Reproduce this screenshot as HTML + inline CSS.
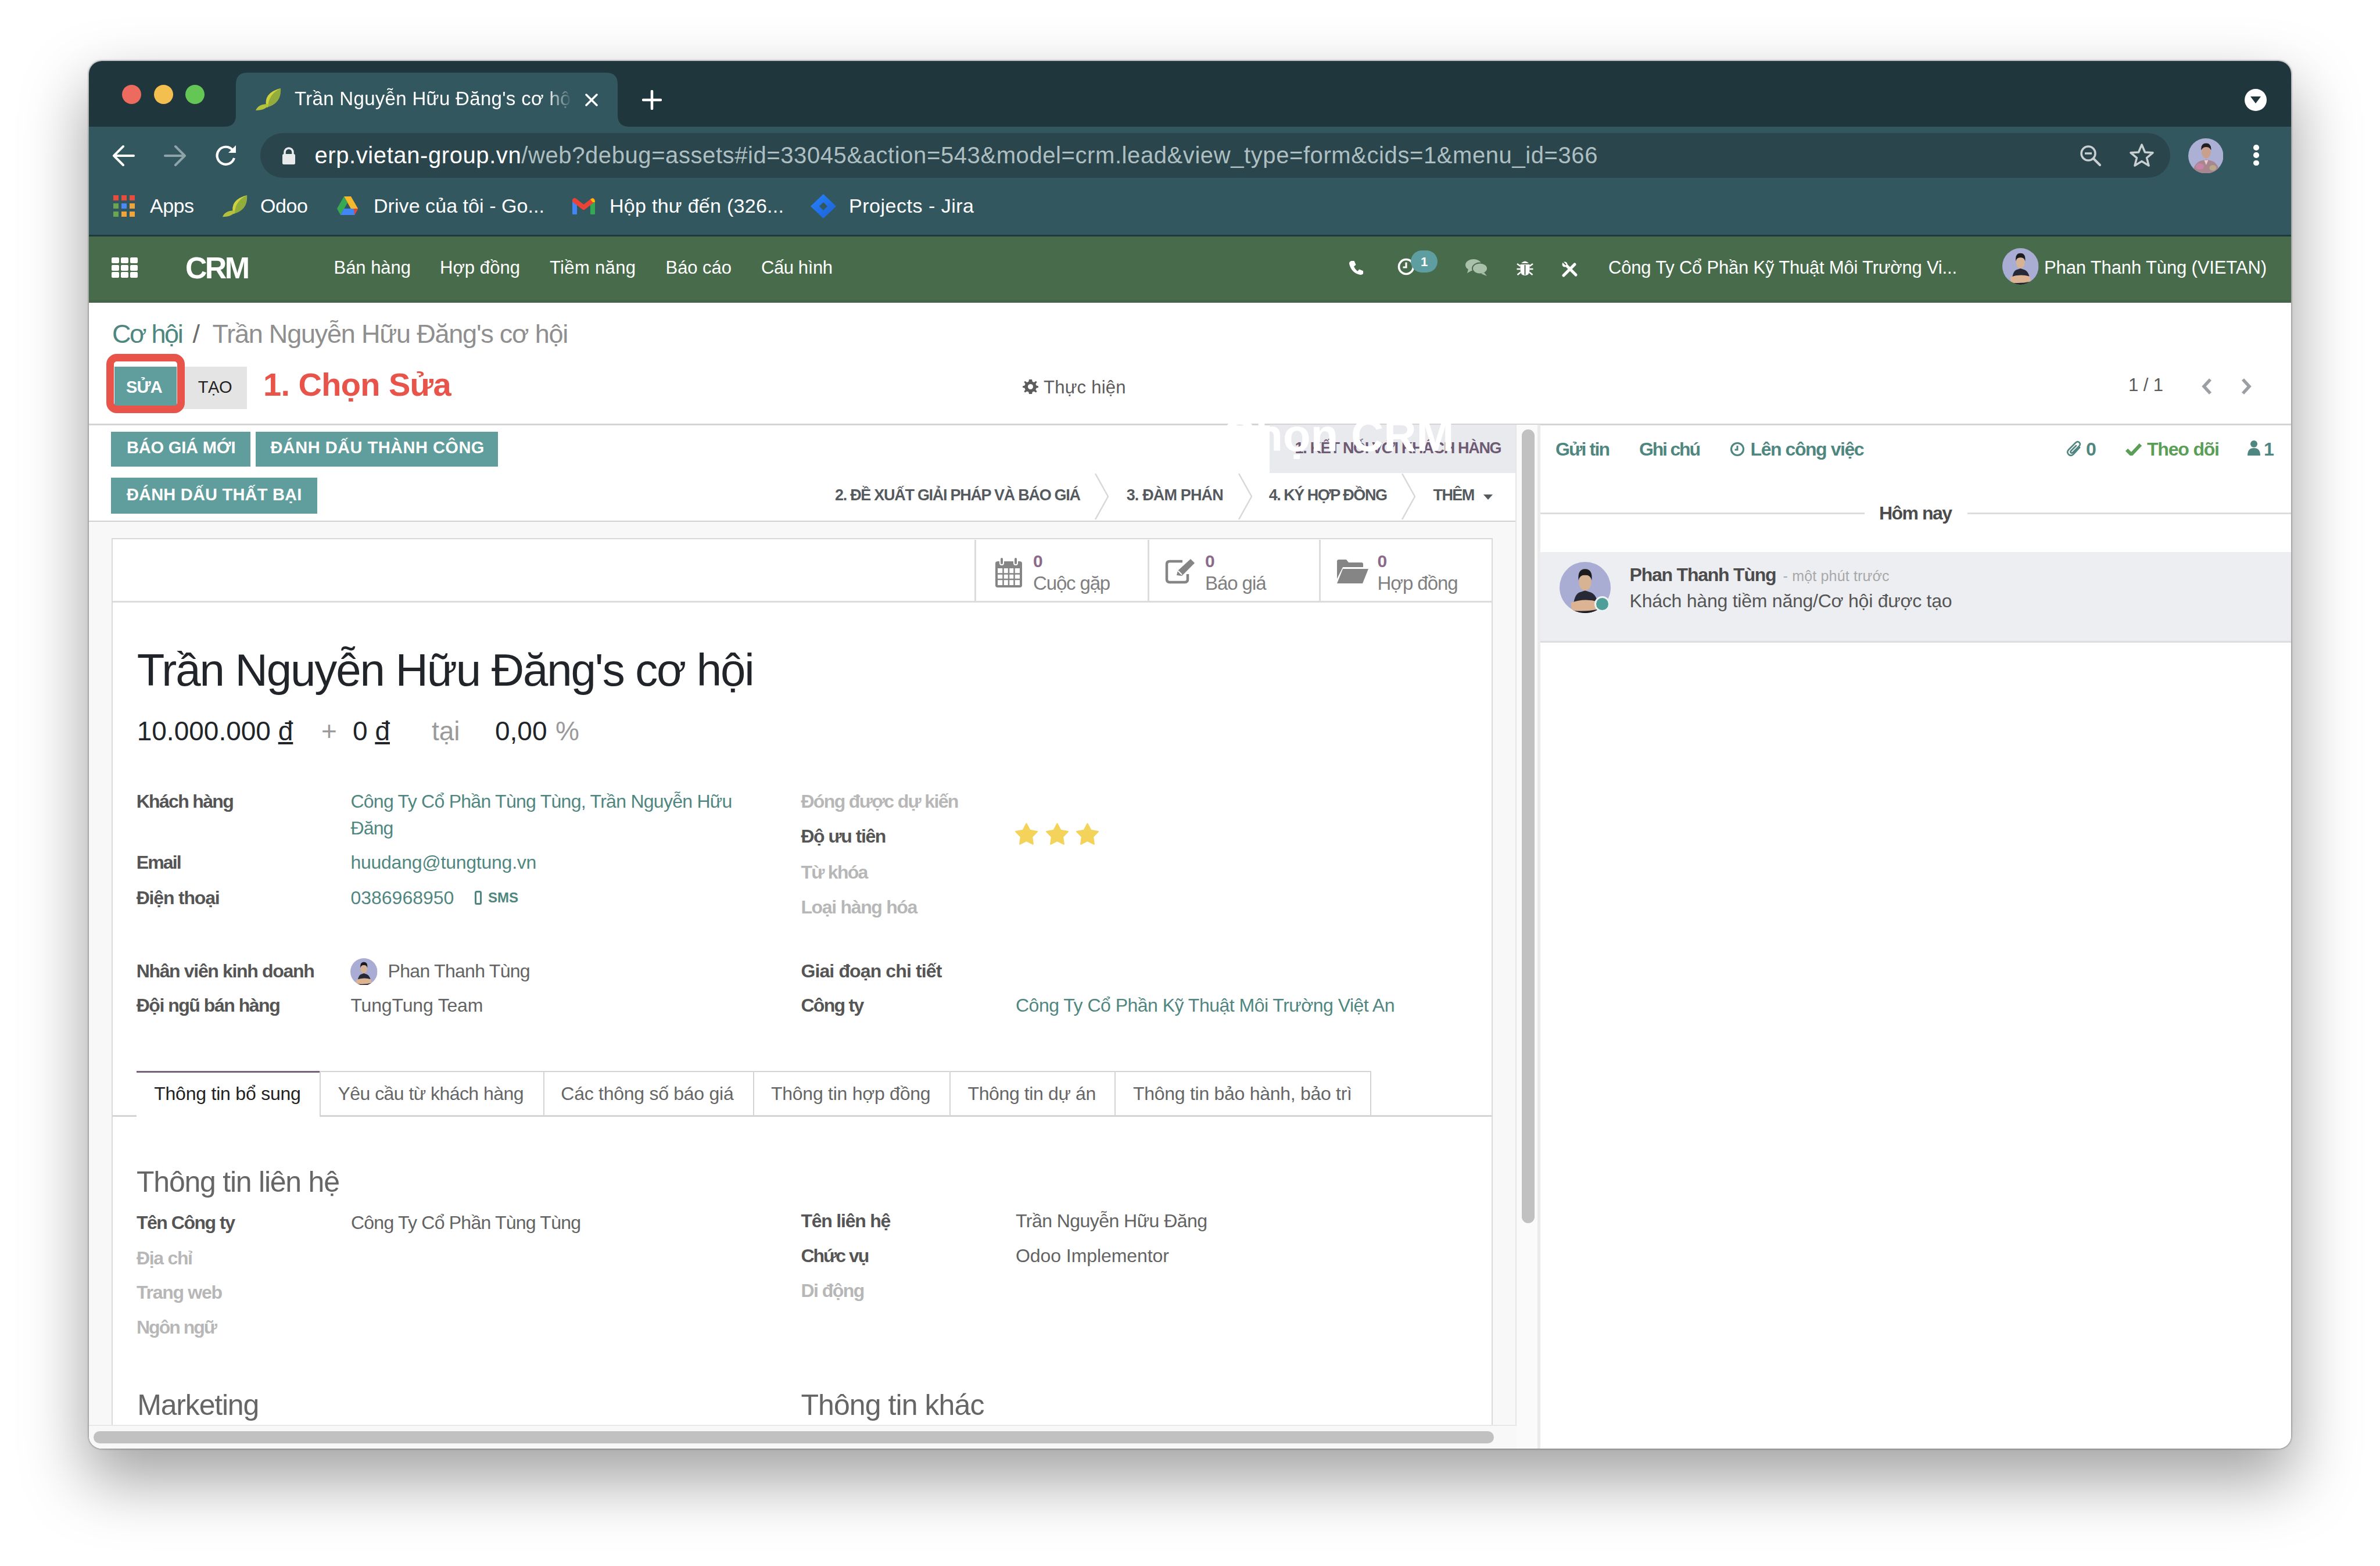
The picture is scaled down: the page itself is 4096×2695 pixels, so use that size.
<!DOCTYPE html>
<html><head><meta charset="utf-8"><style>
html,body{margin:0;padding:0;width:4096px;height:2695px;overflow:hidden;background:#fff;}
body{position:relative;font-family:"Liberation Sans",sans-serif;}
.a,.t{position:absolute;}
.t{white-space:nowrap;}
#win{position:absolute;left:153px;top:105px;width:3790px;height:2388px;border-radius:22px;overflow:hidden;background:#fff;}
#shadow{position:absolute;left:153px;top:105px;width:3790px;height:2388px;border-radius:22px;box-shadow:0 50px 110px 6px rgba(0,0,0,0.36),0 0 3px 1px rgba(0,0,0,0.35);}
</style></head><body>
<div id="shadow"></div>

<div id="win"></div>
<div style="position:absolute;left:153px;top:105px;width:3790px;height:2388px;border-radius:22px;overflow:hidden;">
<div style="position:absolute;left:-153px;top:-105px;width:4096px;height:2695px;">
<div class="a" style="left:153.0px;top:105.0px;width:3790.0px;height:113.0px;background:#20363d;"></div>
<div class="a" style="left:153.0px;top:218.0px;width:3790.0px;height:186.0px;background:#33575f;"></div>
<div class="a" style="left:153.0px;top:404.0px;width:3790.0px;height:3.0px;background:#1e3a40;"></div>
<div class="a" style="left:153.0px;top:407.0px;width:3790.0px;height:114.0px;background:#486c4b;"></div>
<div class="a" style="left:153.0px;top:516.0px;width:3790.0px;height:5.0px;background:#44654a;"></div>
<div class="a" style="left:209.9px;top:146.0px;width:33px;height:33px;border-radius:50%;background:#ec6a5e;"></div>
<div class="a" style="left:264.5px;top:146.0px;width:33px;height:33px;border-radius:50%;background:#f3bf4f;"></div>
<div class="a" style="left:319.3px;top:146.0px;width:33px;height:33px;border-radius:50%;background:#63c655;"></div>
<svg class="a" style="left:386.0px;top:125.0px;" width="697.0" height="93.0" viewBox="0 0 697 93"><path d="M0 93 Q20 93 20 73 L20 20 Q20 0 40 0 L657 0 Q677 0 677 20 L677 73 Q677 93 697 93 Z" fill="#33575f"/></svg>
<svg class="a" style="left:440.0px;top:152.0px;" width="44.0" height="40.0" viewBox="0 0 44 40"><path d="M19 33 Q12 8 43 0 Q45 26 19 33 Z" fill="#93ad3c"/><path d="M19 33 Q12 8 43 0 Q22 10 21 32 Z" fill="#cfd23c"/><path d="M0 38 Q5 26 23 27 Q18 38 0 38 Z" fill="#b3c13d"/></svg>
<div class="t" style="left:507px;top:150.6px;font-size:33px;line-height:38px;color:#fff;width:476px;letter-spacing:0.31px;overflow:hidden;-webkit-mask-image:linear-gradient(90deg,#000 0,#000 436px,rgba(0,0,0,0.6) 448px,rgba(0,0,0,0.3) 466px,transparent 476px);">Trần Nguyễn Hữu Đăng's cơ hội</div>
<svg class="a" style="left:1006.0px;top:160.0px;" width="24.0" height="24.0" viewBox="0 0 24 24"><path d="M3 3 L21 21 M21 3 L3 21" stroke="#fff" stroke-width="3.5" stroke-linecap="round"/></svg>
<svg class="a" style="left:1105.0px;top:155.0px;" width="34.0" height="34.0" viewBox="0 0 34 34"><path d="M17 2 V32 M2 17 H32" stroke="#fff" stroke-width="4.5" stroke-linecap="round"/></svg>
<div class="a" style="left:3863px;top:153px;width:38px;height:38px;border-radius:50%;background:#fff;"></div>
<svg class="a" style="left:3872.0px;top:165.0px;" width="20.0" height="14.0" viewBox="0 0 20 14"><path d="M1 1 H19 L10 13 Z" fill="#20363d"/></svg>
<svg class="a" style="left:192.0px;top:248.0px;" width="42.0" height="40.0" viewBox="0 0 42 40"><path d="M38 20 H5 M20 4 L4 20 L20 36" stroke="#fff" stroke-width="4" fill="none" stroke-linecap="round" stroke-linejoin="round"/></svg>
<svg class="a" style="left:280.0px;top:248.0px;" width="42.0" height="40.0" viewBox="0 0 42 40"><path d="M4 20 H37 M22 4 L38 20 L22 36" stroke="#8ea4a9" stroke-width="4" fill="none" stroke-linecap="round" stroke-linejoin="round"/></svg>
<svg class="a" style="left:366.0px;top:246.0px;" width="44.0" height="44.0" viewBox="0 0 44 44"><path d="M34 12 A15 15 0 1 0 37 26" stroke="#fff" stroke-width="4.2" fill="none"/><path d="M40 4 V17 H27 Z" fill="#fff"/></svg>
<div class="a" style="left:448px;top:229px;width:3287px;height:77px;border-radius:38.5px;background:#2a454c;"></div>
<svg class="a" style="left:485.0px;top:252.0px;" width="24.0" height="32.0" viewBox="0 0 24 32"><path d="M5 14 V10 A7 7 0 0 1 19 10 V14" stroke="#e8eaeb" stroke-width="3.5" fill="none"/><rect x="1" y="13" width="22" height="18" rx="2.5" fill="#e8eaeb"/></svg>
<div class="t " style="left:541.5px;top:244.4px;font-size:40.00px;line-height:46.00px;color:#fff;letter-spacing:0.586px;">erp.vietan-group.vn<span style="color:#aebfc2">/web?debug=assets#id=33045&amp;action=543&amp;model=crm.lead&amp;view_type=form&amp;cids=1&amp;menu_id=366</span></div>
<svg class="a" style="left:3578.0px;top:248.0px;" width="40.0" height="40.0" viewBox="0 0 40 40"><circle cx="16" cy="16" r="12" stroke="#c9d0d2" stroke-width="3.5" fill="none"/><path d="M10 16 H22" stroke="#c9d0d2" stroke-width="3.5"/><path d="M25 25 L36 36" stroke="#c9d0d2" stroke-width="4" stroke-linecap="round"/></svg>
<svg class="a" style="left:3664.0px;top:246.0px;" width="44.0" height="42.0" viewBox="0 0 44 42"><path d="M22 3 L27.5 16 L41 16.8 L30.6 25.6 L34 39 L22 31.6 L10 39 L13.4 25.6 L3 16.8 L16.5 16 Z" stroke="#c9d0d2" stroke-width="3.5" fill="none" stroke-linejoin="round"/></svg>
<svg class="a" style="left:3765.8px;top:237.8px;" width="60.5" height="60.5" viewBox="0 0 100 100"><clipPath id="cl1"><circle cx="50" cy="50" r="50"/></clipPath><g clip-path="url(#cl1)"><rect width="100" height="100" fill="#acb0d4"/><ellipse cx="51" cy="40" rx="13" ry="17" fill="#caa08c"/><path d="M37 34 Q35 14 51 14 Q66 14 65 34 Q60 24 51 25 Q42 24 37 34 Z" fill="#231f20"/><path d="M12 100 Q16 70 36 64 L51 60 L66 64 Q86 70 90 100 Z" fill="#a8868f"/><ellipse cx="33" cy="80" rx="12" ry="9" fill="#c784a6"/><ellipse cx="70" cy="84" rx="10" ry="8" fill="#b9a88a"/><path d="M45 62 L51 76 L57 62 Z" fill="#e9c9cf"/></g></svg>
<div class="a" style="left:3878px;top:249.0px;width:9.5px;height:9.5px;border-radius:50%;background:#fff;"></div>
<div class="a" style="left:3878px;top:262.4px;width:9.5px;height:9.5px;border-radius:50%;background:#fff;"></div>
<div class="a" style="left:3878px;top:275.8px;width:9.5px;height:9.5px;border-radius:50%;background:#fff;"></div>
<div class="a" style="left:195.0px;top:336.0px;width:9.0px;height:9.0px;background:#e94b3c;"></div>
<div class="a" style="left:208.8px;top:336.0px;width:9.0px;height:9.0px;background:#e94b3c;"></div>
<div class="a" style="left:222.6px;top:336.0px;width:9.0px;height:9.0px;background:#e94b3c;"></div>
<div class="a" style="left:195.0px;top:349.8px;width:9.0px;height:9.0px;background:#6aa552;"></div>
<div class="a" style="left:208.8px;top:349.8px;width:9.0px;height:9.0px;background:#4a8af4;"></div>
<div class="a" style="left:222.6px;top:349.8px;width:9.0px;height:9.0px;background:#f0a53a;"></div>
<div class="a" style="left:195.0px;top:363.6px;width:9.0px;height:9.0px;background:#6aa552;"></div>
<div class="a" style="left:208.8px;top:363.6px;width:9.0px;height:9.0px;background:#f0a53a;"></div>
<div class="a" style="left:222.6px;top:363.6px;width:9.0px;height:9.0px;background:#f0a53a;"></div>
<div class="t " style="left:258.0px;top:334.7px;font-size:34.00px;line-height:39.10px;color:#fff;letter-spacing:-0.500px;">Apps</div>
<svg class="a" style="left:383.0px;top:336.0px;" width="43.1" height="39.2" viewBox="0 0 44 40"><path d="M19 33 Q12 8 43 0 Q45 26 19 33 Z" fill="#93ad3c"/><path d="M19 33 Q12 8 43 0 Q22 10 21 32 Z" fill="#cfd23c"/><path d="M0 38 Q5 26 23 27 Q18 38 0 38 Z" fill="#b3c13d"/></svg>
<div class="t " style="left:448.0px;top:334.7px;font-size:34.00px;line-height:39.10px;color:#fff;letter-spacing:-0.392px;">Odoo</div>
<svg class="a" style="left:579.0px;top:337.0px;" width="38.0" height="36.0" viewBox="0 0 38 36"><path d="M13 1 H25 L37 22 L31 33 Z" fill="#f6b92b"/><path d="M13 1 L1 22 L7 33 L19 12 Z" fill="#39a853"/><path d="M7 33 H31 L37 22 H13 Z" fill="#4285f4"/><path d="M31 33 L37 22 L30 22 Z" fill="#e94235"/></svg>
<div class="t " style="left:643.0px;top:334.7px;font-size:34.00px;line-height:39.10px;color:#fff;letter-spacing:0.056px;">Drive của tôi - Go...</div>
<svg class="a" style="left:985.0px;top:340.0px;" width="39.0" height="29.0" viewBox="0 0 39 29"><path d="M4 27 V6" stroke="#4285f4" stroke-width="8" stroke-linecap="round"/><path d="M35 27 V6" stroke="#34a853" stroke-width="8" stroke-linecap="round"/><path d="M4 5 L19.5 17 L35 5" stroke="#ea4335" stroke-width="8" fill="none" stroke-linecap="round" stroke-linejoin="round"/><path d="M31 3 L35 1 Q39 3 39 8 L35 8 Z" fill="#fbbc04"/></svg>
<div class="t " style="left:1049.0px;top:334.7px;font-size:34.00px;line-height:39.10px;color:#fff;letter-spacing:0.281px;">Hộp thư đến (326...</div>
<svg class="a" style="left:1395.0px;top:334.0px;" width="44.0" height="42.0" viewBox="0 0 44 42"><defs><linearGradient id="jg" x1="0" y1="0" x2="1" y2="1"><stop offset="0" stop-color="#2684ff"/><stop offset="1" stop-color="#1d5fd1"/></linearGradient></defs><path d="M22 0 L44 21 L22 42 L0 21 Z" fill="url(#jg)"/><path d="M22 14 L29 21 L22 28 L15 21 Z" fill="#33575f"/></svg>
<div class="t " style="left:1461.0px;top:334.7px;font-size:34.00px;line-height:39.10px;color:#fff;letter-spacing:0.513px;">Projects - Jira</div>
<div class="a" style="left:192.0px;top:443.0px;width:12.5px;height:10px;border-radius:2px;background:#fff;"></div>
<div class="a" style="left:208.0px;top:443.0px;width:12.5px;height:10px;border-radius:2px;background:#fff;"></div>
<div class="a" style="left:224.0px;top:443.0px;width:12.5px;height:10px;border-radius:2px;background:#fff;"></div>
<div class="a" style="left:192.0px;top:455.5px;width:12.5px;height:10px;border-radius:2px;background:#fff;"></div>
<div class="a" style="left:208.0px;top:455.5px;width:12.5px;height:10px;border-radius:2px;background:#fff;"></div>
<div class="a" style="left:224.0px;top:455.5px;width:12.5px;height:10px;border-radius:2px;background:#fff;"></div>
<div class="a" style="left:192.0px;top:468.0px;width:12.5px;height:10px;border-radius:2px;background:#fff;"></div>
<div class="a" style="left:208.0px;top:468.0px;width:12.5px;height:10px;border-radius:2px;background:#fff;"></div>
<div class="a" style="left:224.0px;top:468.0px;width:12.5px;height:10px;border-radius:2px;background:#fff;"></div>
<div class="t " style="left:319.0px;top:432.1px;font-size:52.00px;line-height:59.80px;color:#fff;font-weight:700;letter-spacing:-3.713px;">CRM</div>
<div class="t " style="left:574.5px;top:442.9px;font-size:31.00px;line-height:35.65px;color:#fff;letter-spacing:-0.034px;">Bán hàng</div>
<div class="t " style="left:757.0px;top:442.9px;font-size:31.00px;line-height:35.65px;color:#fff;letter-spacing:0.066px;">Hợp đồng</div>
<div class="t " style="left:946.0px;top:442.9px;font-size:31.00px;line-height:35.65px;color:#fff;letter-spacing:0.335px;">Tiềm năng</div>
<div class="t " style="left:1145.5px;top:442.9px;font-size:31.00px;line-height:35.65px;color:#fff;letter-spacing:-0.043px;">Báo cáo</div>
<div class="t " style="left:1310.0px;top:442.9px;font-size:31.00px;line-height:35.65px;color:#fff;letter-spacing:-0.403px;">Cấu hình</div>
<svg class="a" style="left:2321.0px;top:448.0px;" width="26.0" height="26.0" viewBox="0 0 27 27"><path d="M5 1 L10 1 L13 8 L9.5 11 Q12 17 16 19.5 L19 16 L26 19 L26 24 Q24.5 26 21 26 Q5 23 1 6 Q1 2 5 1 Z" fill="#fff"/></svg>
<svg class="a" style="left:2404.0px;top:443.0px;" width="32.0" height="32.0" viewBox="0 0 32 32"><circle cx="16" cy="16" r="12.5" stroke="#fff" stroke-width="3.6" fill="none"/><path d="M16 8.5 V17 H10.5" stroke="#fff" stroke-width="3.2" fill="none"/></svg>
<div class="a" style="left:2428px;top:431px;width:46px;height:38px;border-radius:19px;background:#5f9ea0;"></div>
<div class="t " style="left:2445.0px;top:437.7px;font-size:22.00px;line-height:25.30px;color:#fff;font-weight:700;">1</div>
<svg class="a" style="left:2521.0px;top:444.0px;" width="40.0" height="32.0" viewBox="0 0 40 32"><ellipse cx="15" cy="12" rx="14" ry="10" fill="#a9c0aa"/><path d="M6 19 L4 26 L13 21 Z" fill="#a9c0aa"/><ellipse cx="26" cy="18" rx="13" ry="9.5" fill="#a9c0aa" stroke="#486c4b" stroke-width="2"/><path d="M33 25 L38 31 L28 27 Z" fill="#a9c0aa"/></svg>
<svg class="a" style="left:2610.0px;top:445.0px;" width="29.0" height="30.0" viewBox="0 0 29 30"><path d="M8 8 Q14.5 1 21 8 Z" fill="#fff"/><path d="M6.5 10 H22.5 V19 Q22.5 29 14.5 29 Q6.5 29 6.5 19 Z" fill="#fff"/><path d="M14.5 11 V28" stroke="#486c4b" stroke-width="2"/><path d="M1 9 L6.5 13 M28 9 L22.5 13 M0.5 18 H6.5 M28.5 18 H22.5 M1.5 28 L7 23.5 M27.5 28 L22 23.5" stroke="#fff" stroke-width="2.6"/></svg>
<svg class="a" style="left:2688.0px;top:450.0px;" width="28.0" height="27.0" viewBox="0 0 28 27"><path d="M3 24 L22 5" stroke="#fff" stroke-width="5" stroke-linecap="round"/><path d="M5 4 L24 23" stroke="#fff" stroke-width="5" stroke-linecap="round"/><circle cx="5" cy="5" r="4.5" fill="#fff"/><path d="M2 1 L7 6" stroke="#486c4b" stroke-width="2"/></svg>
<div class="t " style="left:2768.0px;top:442.9px;font-size:31.00px;line-height:35.65px;color:#fff;letter-spacing:-0.200px;">Công Ty Cổ Phần Kỹ Thuật Môi Trường Vi...</div>
<svg class="a" style="left:3446.2px;top:427.2px;" width="62.5" height="62.5" viewBox="0 0 100 100"><clipPath id="cl2"><circle cx="50" cy="50" r="50"/></clipPath><g clip-path="url(#cl2)"><rect width="100" height="100" fill="#a9add3"/><path d="M26 102 Q26 66 38 60 L50 56 L62 60 Q76 66 78 102 Z" fill="#272a36"/><ellipse cx="50" cy="40" rx="12" ry="16" fill="#d8b393"/><path d="M37 36 Q35 14 50 14 Q65 14 63 36 Q60 25 50 26 Q40 25 37 36 Z" fill="#1c1c1e"/><path d="M22 80 Q48 70 76 78 L78 92 Q50 98 24 95 Z" fill="#dcb393"/><path d="M30 96 Q50 100 70 96 L70 102 L30 102 Z" fill="#151515"/></g></svg>
<div class="t " style="left:3518.0px;top:442.9px;font-size:31.00px;line-height:35.65px;color:#fff;letter-spacing:-0.130px;">Phan Thanh Tùng (VIETAN)</div>
<div class="t " style="left:193.0px;top:548.5px;font-size:45.00px;line-height:51.75px;color:#4f8780;letter-spacing:-2.373px;">Cơ hội</div>
<div class="t " style="left:331.6px;top:548.5px;font-size:45.00px;line-height:51.75px;color:#6c6c6c;">/</div>
<div class="t " style="left:365.6px;top:548.5px;font-size:45.00px;line-height:51.75px;color:#8f8f8f;letter-spacing:-1.220px;">Trần Nguyễn Hữu Đăng's cơ hội</div>
<div class="a" style="left:197.0px;top:631.0px;width:107.0px;height:73.0px;background:#5f9e9d;"></div>
<div class="a" style="left:304.0px;top:631.0px;width:121.4px;height:73.0px;background:#e4e4e4;"></div>
<div class="t " style="left:217.0px;top:650.3px;font-size:29.00px;line-height:33.35px;color:#fff;font-weight:700;letter-spacing:-0.823px;">SỬA</div>
<div class="t " style="left:340.8px;top:650.3px;font-size:29.00px;line-height:33.35px;color:#222;letter-spacing:-0.458px;">TẠO</div>
<div class="a" style="left:183px;top:608.5px;width:108.5px;height:76px;border:13px solid #e8534a;border-radius:18px;"></div>
<div class="t " style="left:453.0px;top:630.4px;font-size:56.00px;line-height:64.40px;color:#e8534a;font-weight:700;letter-spacing:-0.624px;">1. Chọn Sửa</div>
<svg class="a" style="left:1760.0px;top:652.0px;" width="27.0" height="27.0" viewBox="0 0 27 27"><path d="M13.5 1 L16 1 L16.8 4.8 L19.6 6 L22.8 3.8 L24.6 5.6 L22.4 8.8 L23.6 11.6 L27 12.4 L27 15 L23.6 15.8 L22.4 18.6 L24.6 21.8 L22.8 23.6 L19.6 21.4 L16.8 22.6 L16 26 L11 26 L10.2 22.6 L7.4 21.4 L4.2 23.6 L2.4 21.8 L4.6 18.6 L3.4 15.8 L0 15 L0 12.4 L3.4 11.6 L4.6 8.8 L2.4 5.6 L4.2 3.8 L7.4 6 L10.2 4.8 L11 1 Z" fill="#5c5c5c"/><circle cx="13.5" cy="13.5" r="4.5" fill="#fff"/></svg>
<div class="t " style="left:1796.0px;top:649.4px;font-size:31.00px;line-height:35.65px;color:#5c5c5c;letter-spacing:0.231px;">Thực hiện</div>
<div class="t " style="left:3663.0px;top:645.4px;font-size:31.00px;line-height:35.65px;color:#5a5a5a;letter-spacing:-0.080px;">1 / 1</div>
<svg class="a" style="left:3788.0px;top:650.0px;" width="20.0" height="30.0" viewBox="0 0 20 30"><path d="M16 3 L5 15 L16 27" stroke="#9b9ea3" stroke-width="5.5" fill="none"/></svg>
<svg class="a" style="left:3856.0px;top:650.0px;" width="20.0" height="30.0" viewBox="0 0 20 30"><path d="M4 3 L15 15 L4 27" stroke="#9b9ea3" stroke-width="5.5" fill="none"/></svg>
<div class="a" style="left:153.0px;top:728.5px;width:3790.0px;height:3.0px;background:#d4d4d4;"></div>
<div class="a" style="left:153.0px;top:896.0px;width:2457.0px;height:2.2px;background:#d0d0d5;"></div>
<div class="a" style="left:191.0px;top:743.0px;width:240.0px;height:60.0px;background:#5f9e9d;"></div>
<div class="t " style="left:217.9px;top:753.6px;font-size:29.00px;line-height:33.35px;color:#fff;font-weight:700;letter-spacing:-0.147px;">BÁO GIÁ MỚI</div>
<div class="a" style="left:440.0px;top:743.0px;width:417.4px;height:60.0px;background:#5f9e9d;"></div>
<div class="t " style="left:465.4px;top:753.6px;font-size:29.00px;line-height:33.35px;color:#fff;font-weight:700;letter-spacing:0.485px;">ĐÁNH DẤU THÀNH CÔNG</div>
<div class="a" style="left:191.0px;top:822.0px;width:354.6px;height:62.0px;background:#5f9e9d;"></div>
<div class="t " style="left:217.9px;top:835.3px;font-size:29.00px;line-height:33.35px;color:#fff;font-weight:700;letter-spacing:0.210px;">ĐÁNH DẤU THẤT BẠI</div>
<div class="a" style="left:2184.6px;top:731.0px;width:423.4px;height:82.5px;background:#e9eaee;"></div>
<div class="t " style="left:2228.6px;top:756.1px;font-size:27.00px;line-height:31.05px;color:#6e5a73;font-weight:700;letter-spacing:-1.315px;">1. KẾT NỐI VỚI KHÁCH HÀNG</div>
<div class="t " style="left:1437.0px;top:837.4px;font-size:27.00px;line-height:31.05px;color:#555a5f;font-weight:700;letter-spacing:-1.286px;">2. ĐỀ XUẤT GIẢI PHÁP VÀ BÁO GIÁ</div>
<div class="t " style="left:1938.7px;top:837.4px;font-size:27.00px;line-height:31.05px;color:#555a5f;font-weight:700;letter-spacing:-0.852px;">3. ĐÀM PHÁN</div>
<div class="t " style="left:2183.7px;top:837.4px;font-size:27.00px;line-height:31.05px;color:#555a5f;font-weight:700;letter-spacing:-1.491px;">4. KÝ HỢP ĐỒNG</div>
<div class="t " style="left:2466.5px;top:837.4px;font-size:27.00px;line-height:31.05px;color:#555a5f;font-weight:700;letter-spacing:-1.598px;">THÊM</div>
<svg class="a" style="left:2553.0px;top:851.0px;" width="16.0" height="9.0" viewBox="0 0 16 9"><path d="M0 0 H16 L8 9 Z" fill="#555a5f"/></svg>
<svg class="a" style="left:1884.0px;top:815.0px;" width="24.0" height="79.0" viewBox="0 0 24 79"><path d="M1 0 L23 39.5 L1 79" stroke="#d8d8d8" stroke-width="2.5" fill="none"/></svg>
<svg class="a" style="left:2131.0px;top:815.0px;" width="24.0" height="79.0" viewBox="0 0 24 79"><path d="M1 0 L23 39.5 L1 79" stroke="#d8d8d8" stroke-width="2.5" fill="none"/></svg>
<svg class="a" style="left:2412.0px;top:815.0px;" width="24.0" height="79.0" viewBox="0 0 24 79"><path d="M1 0 L23 39.5 L1 79" stroke="#d8d8d8" stroke-width="2.5" fill="none"/></svg>
<div class="t " style="left:2104.0px;top:705.1px;font-size:78.00px;line-height:89.70px;color:#fff;font-weight:700;">Chọn CRM</div>
<div class="a" style="left:153.0px;top:898.0px;width:2457.0px;height:1555.0px;background:#f8f8f8;"></div>
<div class="a" style="left:191.5px;top:926px;width:2373px;height:1600px;background:#fff;border:2.5px solid #d9d9dc;"></div>
<div class="a" style="left:2608.0px;top:731.0px;width:2.0px;height:1762.0px;background:#e6e6e6;"></div>
<div class="a" style="left:194.0px;top:1034.0px;width:2373.0px;height:2.5px;background:#dcdcdf;"></div>
<div class="a" style="left:1677.0px;top:929.0px;width:2.5px;height:106.0px;background:#dcdcdf;"></div>
<div class="a" style="left:1975.0px;top:929.0px;width:2.5px;height:106.0px;background:#dcdcdf;"></div>
<div class="a" style="left:2270.0px;top:929.0px;width:2.5px;height:106.0px;background:#dcdcdf;"></div>
<svg class="a" style="left:1711.0px;top:958.0px;" width="50.0" height="55.0" viewBox="0 0 50 55"><rect x="2" y="8" width="46" height="45" rx="4" fill="#858585"/><rect x="6" y="20" width="38" height="29" fill="#fff"/><path d="M6 29.5 H44 M6 39 H44 M15.5 20 V49 M25 20 V49 M34.5 20 V49" stroke="#858585" stroke-width="2.5"/><rect x="10" y="1" width="6" height="13" rx="3" fill="#858585" stroke="#fff" stroke-width="2"/><rect x="34" y="1" width="6" height="13" rx="3" fill="#858585" stroke="#fff" stroke-width="2"/></svg>
<svg class="a" style="left:2005.0px;top:960.0px;" width="54.0" height="45.0" viewBox="0 0 54 45"><path d="M30 6 H8 Q3 6 3 11 V37 Q3 42 8 42 H34 Q39 42 39 37 V28" stroke="#858585" stroke-width="4.5" fill="none"/><path d="M20 30 L22 22 L44 2 L51 9 L29 31 Z" fill="#858585"/><path d="M22 22 L29 29" stroke="#fff" stroke-width="2"/></svg>
<svg class="a" style="left:2299.0px;top:962.0px;" width="58.0" height="43.0" viewBox="0 0 58 43"><path d="M2 4 Q2 1 5 1 H18 L22 6 H44 Q47 6 47 9 V14 H12 L2 34 Z" fill="#858585"/><path d="M12 17 H56 L46 42 H2 Z" fill="#858585"/></svg>
<div class="t " style="left:1778.0px;top:948.9px;font-size:30.00px;line-height:34.50px;color:#8a6a88;font-weight:700;">0</div>
<div class="t " style="left:1778.0px;top:985.1px;font-size:33.00px;line-height:37.95px;color:#808080;letter-spacing:-1.153px;">Cuộc gặp</div>
<div class="t " style="left:2074.0px;top:948.9px;font-size:30.00px;line-height:34.50px;color:#8a6a88;font-weight:700;">0</div>
<div class="t " style="left:2074.0px;top:985.1px;font-size:33.00px;line-height:37.95px;color:#808080;letter-spacing:-1.071px;">Báo giá</div>
<div class="t " style="left:2370.6px;top:948.9px;font-size:30.00px;line-height:34.50px;color:#8a6a88;font-weight:700;">0</div>
<div class="t " style="left:2370.6px;top:985.1px;font-size:33.00px;line-height:37.95px;color:#808080;letter-spacing:-1.058px;">Hợp đồng</div>
<div class="t " style="left:235.7px;top:1108.8px;font-size:78.00px;line-height:89.70px;color:#212529;letter-spacing:-2.080px;">Trần Nguyễn Hữu Đăng's cơ hội</div>
<div class="t " style="left:235.7px;top:1232.2px;font-size:46.00px;line-height:52.90px;color:#212529;">10.000.000 <u>đ</u></div>
<div class="t " style="left:553.0px;top:1232.2px;font-size:46.00px;line-height:52.90px;color:#9a9a9a;">+</div>
<div class="t " style="left:607.0px;top:1232.2px;font-size:46.00px;line-height:52.90px;color:#212529;">0 <u>đ</u></div>
<div class="t " style="left:743.0px;top:1232.2px;font-size:46.00px;line-height:52.90px;color:#9a9a9a;">tại</div>
<div class="t " style="left:852.0px;top:1232.2px;font-size:46.00px;line-height:52.90px;color:#212529;">0,00</div>
<div class="t " style="left:956.0px;top:1232.2px;font-size:46.00px;line-height:52.90px;color:#9a9a9a;">%</div>
<div class="t " style="left:234.7px;top:1360.5px;font-size:32.00px;line-height:36.80px;color:#555555;font-weight:700;letter-spacing:-1.681px;">Khách hàng</div>
<div class="t " style="left:603.4px;top:1360.5px;font-size:32.00px;line-height:36.80px;color:#4f8780;letter-spacing:-0.726px;">Công Ty Cổ Phần Tùng Tùng, Trần Nguyễn Hữu</div>
<div class="t " style="left:603.4px;top:1406.5px;font-size:32.00px;line-height:36.80px;color:#4f8780;letter-spacing:-0.834px;">Đăng</div>
<div class="t " style="left:234.7px;top:1465.5px;font-size:32.00px;line-height:36.80px;color:#555555;font-weight:700;letter-spacing:-1.844px;">Email</div>
<div class="t " style="left:603.4px;top:1465.5px;font-size:32.00px;line-height:36.80px;color:#4f8780;letter-spacing:-0.240px;">huudang@tungtung.vn</div>
<div class="t " style="left:234.7px;top:1526.9px;font-size:32.00px;line-height:36.80px;color:#555555;font-weight:700;letter-spacing:-1.186px;">Điện thoại</div>
<div class="t " style="left:603.4px;top:1526.9px;font-size:32.00px;line-height:36.80px;color:#4f8780;letter-spacing:0.003px;">0386968950</div>
<svg class="a" style="left:817.0px;top:1533.0px;" width="12.0" height="24.0" viewBox="0 0 12 24"><rect x="1.5" y="1.5" width="9" height="21" rx="2" stroke="#4f8780" stroke-width="3" fill="none"/></svg>
<div class="t " style="left:840.0px;top:1530.9px;font-size:24.00px;line-height:27.60px;color:#4f8780;font-weight:700;letter-spacing:-0.005px;">SMS</div>
<div class="t " style="left:234.7px;top:1652.5px;font-size:32.00px;line-height:36.80px;color:#555555;font-weight:700;letter-spacing:-1.341px;">Nhân viên kinh doanh</div>
<svg class="a" style="left:603.0px;top:1648.8px;" width="46.5" height="46.5" viewBox="0 0 100 100"><clipPath id="cl3"><circle cx="50" cy="50" r="50"/></clipPath><g clip-path="url(#cl3)"><rect width="100" height="100" fill="#a9add3"/><path d="M26 102 Q26 66 38 60 L50 56 L62 60 Q76 66 78 102 Z" fill="#272a36"/><ellipse cx="50" cy="40" rx="12" ry="16" fill="#d8b393"/><path d="M37 36 Q35 14 50 14 Q65 14 63 36 Q60 25 50 26 Q40 25 37 36 Z" fill="#1c1c1e"/><path d="M22 80 Q48 70 76 78 L78 92 Q50 98 24 95 Z" fill="#dcb393"/><path d="M30 96 Q50 100 70 96 L70 102 L30 102 Z" fill="#151515"/></g></svg>
<div class="t " style="left:667.6px;top:1652.5px;font-size:32.00px;line-height:36.80px;color:#636363;letter-spacing:-0.717px;">Phan Thanh Tùng</div>
<div class="t " style="left:234.7px;top:1711.5px;font-size:32.00px;line-height:36.80px;color:#555555;font-weight:700;letter-spacing:-1.479px;">Đội ngũ bán hàng</div>
<div class="t " style="left:603.4px;top:1711.5px;font-size:32.00px;line-height:36.80px;color:#636363;letter-spacing:-0.172px;">TungTung Team</div>
<div class="t " style="left:1378.4px;top:1360.5px;font-size:32.00px;line-height:36.80px;color:#b7b7b7;font-weight:700;letter-spacing:-1.653px;">Đóng được dự kiến</div>
<div class="t " style="left:1378.4px;top:1420.5px;font-size:32.00px;line-height:36.80px;color:#555555;font-weight:700;letter-spacing:-1.450px;">Độ ưu tiên</div>
<svg class="a" style="left:1745.3px;top:1414.5px;" width="43.0" height="43.0" viewBox="0 0 43 43"><path d="M21.50 2.50 L27.50 13.75 L40.05 15.97 L31.20 25.15 L32.96 37.78 L21.50 32.20 L10.04 37.78 L11.80 25.15 L2.95 15.97 L15.50 13.75 Z" fill="#f3d35a" stroke="#f3d35a" stroke-width="2" stroke-linejoin="round"/></svg>
<svg class="a" style="left:1798.0px;top:1414.5px;" width="43.0" height="43.0" viewBox="0 0 43 43"><path d="M21.50 2.50 L27.50 13.75 L40.05 15.97 L31.20 25.15 L32.96 37.78 L21.50 32.20 L10.04 37.78 L11.80 25.15 L2.95 15.97 L15.50 13.75 Z" fill="#f3d35a" stroke="#f3d35a" stroke-width="2" stroke-linejoin="round"/></svg>
<svg class="a" style="left:1850.3px;top:1414.5px;" width="43.0" height="43.0" viewBox="0 0 43 43"><path d="M21.50 2.50 L27.50 13.75 L40.05 15.97 L31.20 25.15 L32.96 37.78 L21.50 32.20 L10.04 37.78 L11.80 25.15 L2.95 15.97 L15.50 13.75 Z" fill="#f3d35a" stroke="#f3d35a" stroke-width="2" stroke-linejoin="round"/></svg>
<div class="t " style="left:1378.4px;top:1483.0px;font-size:32.00px;line-height:36.80px;color:#b7b7b7;font-weight:700;letter-spacing:-1.717px;">Từ khóa</div>
<div class="t " style="left:1378.4px;top:1543.1px;font-size:32.00px;line-height:36.80px;color:#b7b7b7;font-weight:700;letter-spacing:-1.325px;">Loại hàng hóa</div>
<div class="t " style="left:1378.4px;top:1652.5px;font-size:32.00px;line-height:36.80px;color:#555555;font-weight:700;letter-spacing:-0.871px;">Giai đoạn chi tiết</div>
<div class="t " style="left:1378.4px;top:1711.5px;font-size:32.00px;line-height:36.80px;color:#555555;font-weight:700;letter-spacing:-1.683px;">Công ty</div>
<div class="t " style="left:1748.0px;top:1711.5px;font-size:32.00px;line-height:36.80px;color:#4f8780;letter-spacing:-0.510px;">Công Ty Cổ Phần Kỹ Thuật Môi Trường Việt An</div>
<div class="a" style="left:194.0px;top:1919.0px;width:2373.0px;height:2.5px;background:#d4d4d8;"></div>
<div class="a" style="left:234.7px;top:1843px;width:315.3px;height:78px;background:#fff;border-top:3px solid #7a5f7c;"></div>
<div class="a" style="left:550.0px;top:1843px;width:387.5px;height:76px;background:#fff;border:2.5px solid #d4d4d8;border-bottom:none;box-sizing:border-box;"></div>
<div class="a" style="left:935.0px;top:1843px;width:363.1px;height:76px;background:#fff;border:2.5px solid #d4d4d8;border-bottom:none;box-sizing:border-box;"></div>
<div class="a" style="left:1295.6px;top:1843px;width:340.9px;height:76px;background:#fff;border:2.5px solid #d4d4d8;border-bottom:none;box-sizing:border-box;"></div>
<div class="a" style="left:1634.0px;top:1843px;width:286.5px;height:76px;background:#fff;border:2.5px solid #d4d4d8;border-bottom:none;box-sizing:border-box;"></div>
<div class="a" style="left:1918.0px;top:1843px;width:442.1px;height:76px;background:#fff;border:2.5px solid #d4d4d8;border-bottom:none;box-sizing:border-box;"></div>
<div class="t " style="left:265.2px;top:1864.2px;font-size:32.00px;line-height:36.80px;color:#222;letter-spacing:-0.218px;">Thông tin bổ sung</div>
<div class="t " style="left:581.5px;top:1864.2px;font-size:32.00px;line-height:36.80px;color:#666;letter-spacing:-0.550px;">Yêu cầu từ khách hàng</div>
<div class="t " style="left:965.3px;top:1864.2px;font-size:32.00px;line-height:36.80px;color:#666;letter-spacing:-0.265px;">Các thông số báo giá</div>
<div class="t " style="left:1327.0px;top:1864.2px;font-size:32.00px;line-height:36.80px;color:#666;letter-spacing:-0.263px;">Thông tin hợp đồng</div>
<div class="t " style="left:1665.5px;top:1864.2px;font-size:32.00px;line-height:36.80px;color:#666;letter-spacing:-0.380px;">Thông tin dự án</div>
<div class="t " style="left:1950.0px;top:1864.2px;font-size:32.00px;line-height:36.80px;color:#666;letter-spacing:-0.280px;">Thông tin bảo hành, bảo trì</div>
<div class="t " style="left:235.0px;top:2005.7px;font-size:50.00px;line-height:57.50px;color:#666;letter-spacing:-1.232px;">Thông tin liên hệ</div>
<div class="t " style="left:235.0px;top:2085.5px;font-size:32.00px;line-height:36.80px;color:#555555;font-weight:700;letter-spacing:-1.488px;">Tên Công ty</div>
<div class="t " style="left:604.0px;top:2085.5px;font-size:32.00px;line-height:36.80px;color:#636363;letter-spacing:-0.772px;">Công Ty Cổ Phần Tùng Tùng</div>
<div class="t " style="left:235.0px;top:2146.5px;font-size:32.00px;line-height:36.80px;color:#b7b7b7;font-weight:700;letter-spacing:-1.320px;">Địa chỉ</div>
<div class="t " style="left:235.0px;top:2205.5px;font-size:32.00px;line-height:36.80px;color:#b7b7b7;font-weight:700;letter-spacing:-1.282px;">Trang web</div>
<div class="t " style="left:235.0px;top:2266.3px;font-size:32.00px;line-height:36.80px;color:#b7b7b7;font-weight:700;letter-spacing:-1.987px;">Ngôn ngữ</div>
<div class="t " style="left:1378.4px;top:2082.5px;font-size:32.00px;line-height:36.80px;color:#555555;font-weight:700;letter-spacing:-1.214px;">Tên liên hệ</div>
<div class="t " style="left:1748.0px;top:2082.5px;font-size:32.00px;line-height:36.80px;color:#636363;letter-spacing:-0.548px;">Trần Nguyễn Hữu Đăng</div>
<div class="t " style="left:1378.4px;top:2142.5px;font-size:32.00px;line-height:36.80px;color:#555555;font-weight:700;letter-spacing:-1.977px;">Chức vụ</div>
<div class="t " style="left:1748.0px;top:2142.5px;font-size:32.00px;line-height:36.80px;color:#636363;letter-spacing:-0.068px;">Odoo Implementor</div>
<div class="t " style="left:1378.4px;top:2202.5px;font-size:32.00px;line-height:36.80px;color:#b7b7b7;font-weight:700;letter-spacing:-1.513px;">Di động</div>
<div class="t " style="left:236.3px;top:2390.1px;font-size:50.00px;line-height:57.50px;color:#666;letter-spacing:-1.192px;">Marketing</div>
<div class="t " style="left:1378.4px;top:2390.1px;font-size:50.00px;line-height:57.50px;color:#666;letter-spacing:-0.922px;">Thông tin khác</div>
<div class="a" style="left:153.0px;top:2452.0px;width:2457.0px;height:41.0px;background:#f8f8f8;"></div>
<div class="a" style="left:153.0px;top:2452.0px;width:2457.0px;height:2.0px;background:#e8e8e8;"></div>
<div class="a" style="left:161px;top:2463px;width:2410px;height:21px;border-radius:11px;background:#c1c1c1;"></div>
<div class="a" style="left:2610.0px;top:731.0px;width:36.0px;height:1762.0px;background:#fafafa;"></div>
<div class="a" style="left:2646.0px;top:731.0px;width:5.0px;height:1762.0px;background:#ebebeb;"></div>
<div class="a" style="left:2619px;top:739px;width:21.5px;height:1366px;border-radius:11px;background:#c1c1c1;"></div>
<div class="t " style="left:2677.0px;top:754.5px;font-size:32.00px;line-height:36.80px;color:#4f8780;font-weight:700;letter-spacing:-1.823px;">Gửi tin</div>
<div class="t " style="left:2821.0px;top:754.5px;font-size:32.00px;line-height:36.80px;color:#4f8780;font-weight:700;letter-spacing:-2.185px;">Ghi chú</div>
<svg class="a" style="left:2977.0px;top:759.5px;" width="27.0" height="27.0" viewBox="0 0 27 27"><circle cx="13" cy="13" r="10.5" stroke="#4f8780" stroke-width="3.2" fill="none"/><path d="M13 7 V14 H8.5" stroke="#4f8780" stroke-width="3" fill="none"/></svg>
<div class="t " style="left:3012.6px;top:754.5px;font-size:32.00px;line-height:36.80px;color:#4f8780;font-weight:700;letter-spacing:-1.450px;">Lên công việc</div>
<svg class="a" style="left:3556.0px;top:757.0px;" width="27.0" height="30.0" viewBox="0 0 27 30"><path d="M23 13 L12.5 24.5 Q8 29 4 25 Q0 21 4.5 16.5 L16 5 Q19.5 1.5 22.5 4.5 Q25.5 7.5 22 11 L11.5 21.5 Q9.5 23.5 8 22 Q6.5 20.5 8.5 18.5 L17 10" stroke="#4f8780" stroke-width="2.6" fill="none" stroke-linecap="round"/></svg>
<div class="t " style="left:3590.0px;top:754.5px;font-size:32.00px;line-height:36.80px;color:#4f8780;font-weight:700;">0</div>
<svg class="a" style="left:3658.0px;top:762.0px;" width="28.0" height="22.0" viewBox="0 0 28 22"><path d="M2 12 L10 20 L26 3" stroke="#5a9e57" stroke-width="6" fill="none"/></svg>
<div class="t " style="left:3695.0px;top:754.5px;font-size:32.00px;line-height:36.80px;color:#5a9e57;font-weight:700;letter-spacing:-1.188px;">Theo dõi</div>
<svg class="a" style="left:3868.0px;top:757.0px;" width="22.0" height="27.0" viewBox="0 0 22 27"><circle cx="11" cy="7" r="6" fill="#4f8780"/><path d="M0 27 Q0 14 11 14 Q22 14 22 27 Z" fill="#4f8780"/></svg>
<div class="t " style="left:3896.0px;top:754.5px;font-size:32.00px;line-height:36.80px;color:#4f8780;font-weight:700;">1</div>
<div class="a" style="left:2651.0px;top:882.0px;width:558.0px;height:2.5px;background:#dddddd;"></div>
<div class="a" style="left:3386.0px;top:882.0px;width:557.0px;height:2.5px;background:#dddddd;"></div>
<div class="t " style="left:3234.0px;top:864.8px;font-size:32.00px;line-height:36.80px;color:#4c4c4c;font-weight:700;letter-spacing:-1.524px;">Hôm nay</div>
<div class="a" style="left:2651.0px;top:950.0px;width:1292.0px;height:154.0px;background:#eceef1;"></div>
<div class="a" style="left:2651.0px;top:1103.0px;width:1292.0px;height:2.5px;background:#dddddd;"></div>
<svg class="a" style="left:2684.0px;top:966.5px;" width="88.0" height="88.0" viewBox="0 0 100 100"><clipPath id="cl4"><circle cx="50" cy="50" r="50"/></clipPath><g clip-path="url(#cl4)"><rect width="100" height="100" fill="#a9add3"/><path d="M26 102 Q26 66 38 60 L50 56 L62 60 Q76 66 78 102 Z" fill="#272a36"/><ellipse cx="50" cy="40" rx="12" ry="16" fill="#d8b393"/><path d="M37 36 Q35 14 50 14 Q65 14 63 36 Q60 25 50 26 Q40 25 37 36 Z" fill="#1c1c1e"/><path d="M22 80 Q48 70 76 78 L78 92 Q50 98 24 95 Z" fill="#dcb393"/><path d="M30 96 Q50 100 70 96 L70 102 L30 102 Z" fill="#151515"/></g></svg>
<div class="a" style="left:2743.5px;top:1025.8px;width:21px;height:21px;border-radius:50%;background:#4f9f98;border:3px solid #eef1f2;"></div>
<div class="t " style="left:2804.6px;top:970.5px;font-size:32.00px;line-height:36.80px;color:#4c4c4c;font-weight:700;letter-spacing:-1.228px;">Phan Thanh Tùng</div>
<div class="t " style="left:3068.6px;top:977.0px;font-size:25.00px;line-height:28.75px;color:#a8a8a8;letter-spacing:0.173px;">- một phút trước</div>
<div class="t " style="left:2804.6px;top:1016.2px;font-size:32.00px;line-height:36.80px;color:#555;letter-spacing:-0.237px;">Khách hàng tiềm năng/Cơ hội được tạo</div>
</div></div>
</body></html>
